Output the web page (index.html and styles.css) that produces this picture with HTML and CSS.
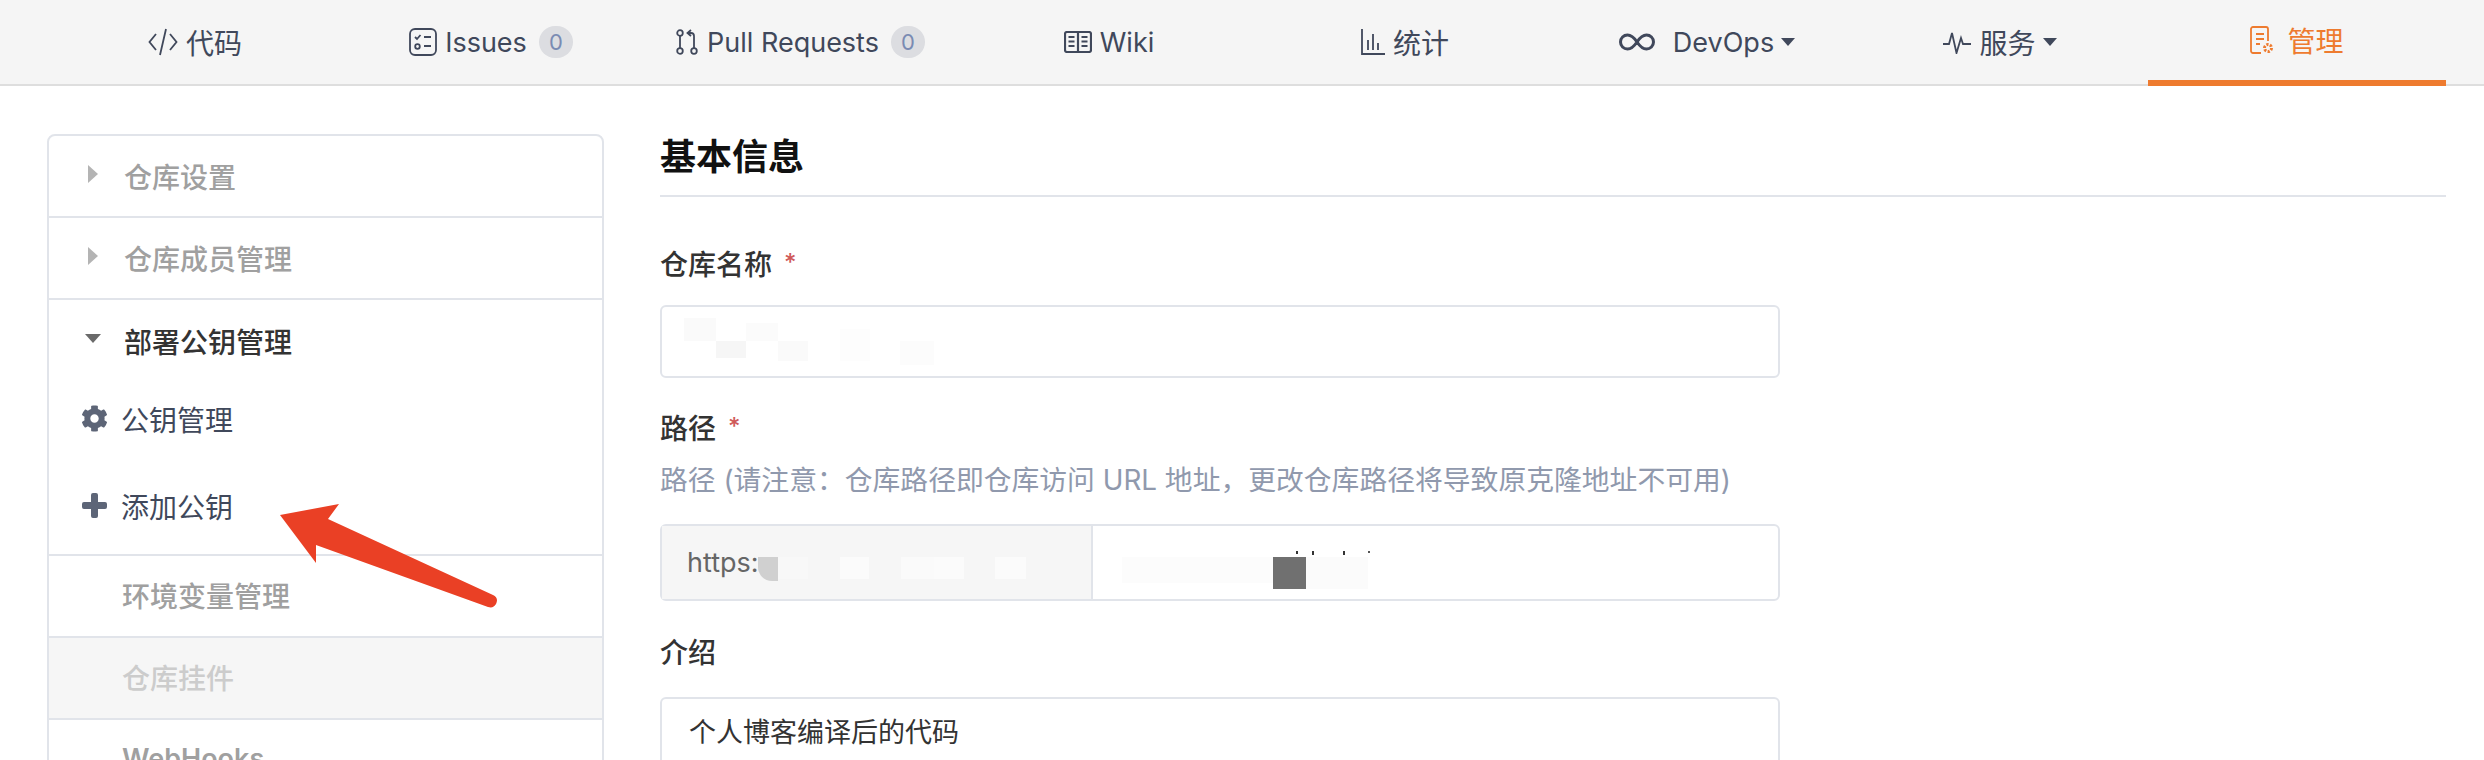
FILE: index.html
```html
<!DOCTYPE html>

<html>
  <head>
    <meta charset="UTF-8" />
    <title>管理</title>
    <link rel="stylesheet" href="styles.css">
  </head>

  <body>
    <nav class="tabs">
      <a class="tabs__item">
        <svg class="icon" width="30" height="28" viewBox="0 0 30 28"><path d="M8 6 1.500 14 8 22M22 6l6.500 8-6.500 8M18 1l-6 26"/></svg>
        <span class="tabs__cjk">代码</span>
      </a>
      <a class="tabs__item">
        <svg class="icon" width="28" height="28" viewBox="0 0 28 28"><rect x="1" y="1" width="26" height="26" rx="5"/><path d="M6 9l2 2 3.500-4M15 9h7M15 18h7"/><circle cx="8.500" cy="18.500" r="2.300"/></svg>
        <span>Issues</span>
        <b class="tabs__badge">0</b>
      </a>
      <a class="tabs__item">
        <svg class="icon" width="24" height="26" viewBox="0 0 24 26"><circle cx="5" cy="4" r="2.800"/><circle cx="5" cy="22" r="2.800"/><circle cx="19" cy="22" r="2.800"/><path d="M5 7v12M19 19V7c0-2-1-3-3-3h-3M16 1l-3.500 3 3.500 3"/></svg>
        <span>Pull Requests</span>
        <b class="tabs__badge">0</b>
      </a>
      <a class="tabs__item">
        <svg class="icon icon--heavy" width="28" height="22" viewBox="0 0 28 22"><rect x="1" y="1" width="26" height="20" rx="2"/><path d="M14 1v20M4.500 6h6M4.500 10.500h6M4.500 15h6M17.500 6h6M17.500 10.500h6M17.500 15h6"/></svg>
        <span>Wiki</span>
      </a>
      <a class="tabs__item">
        <svg class="icon" width="24" height="26" viewBox="0 0 24 26"><path d="M1 0v25h23M7 11v10M12 5v16M17 14v7"/></svg>
        <span class="tabs__cjk">统计</span>
      </a>
      <a class="tabs__item">
        <svg class="icon icon--thick icon--gap" width="36" height="18" viewBox="0 0 36 18"><path d="M18 9c-3-4.500-6-7-9.500-7a7 7 0 0 0 0 14c3.500 0 6.500-2.500 9.500-7s6-7 9.500-7a7 7 0 0 1 0 14c-3.500 0-6.500-2.500-9.500-7z"/></svg>
        <span>DevOps</span>
        <i class="tabs__caret"></i>
      </a>
      <a class="tabs__item">
        <svg class="icon" width="28" height="24" viewBox="0 0 28 24"><path d="M0 14h6l3-11 4.500 20L18 8l2 6h8"/></svg>
        <span class="tabs__cjk">服务</span>
        <i class="tabs__caret"></i>
      </a>
      <a class="tabs__item tabs__item--active">
        <svg class="icon" width="24" height="28" viewBox="0 0 24 28"><path d="M11 27H3a2 2 0 0 1-2-2V3a2 2 0 0 1 2-2h13a2 2 0 0 1 2 2v12M6 8h8M6 13h8M6 18h4"/><circle class="icon__gear" cx="18" cy="22" r="3.500"/></svg>
        <span class="tabs__cjk">管理</span>
      </a>
    </nav>

    <div class="page">
      <aside class="menu">
        <div class="menu__row">
          <i class="menu__arrow"></i>
          <span class="menu__title">仓库设置</span>
        </div>
        <div class="menu__row">
          <i class="menu__arrow"></i>
          <span class="menu__title">仓库成员管理</span>
        </div>
        <div class="menu__group">
          <div class="menu__head">
            <i class="menu__arrow-down"></i>
            <span class="menu__title menu__title--open">部署公钥管理</span>
          </div>
          <a class="menu__link">
            <svg class="menu__icon" width="27" height="27" viewBox="0 0 512 512"><path d="M487.400 315.700l-42.600-24.600c4.300-23.200 4.300-47 0-70.200l42.600-24.600c4.900-2.800 7.100-8.600 5.500-14-11.100-35.600-30-67.800-54.700-94.600-3.800-4.100-10-5.100-14.800-2.300L380.800 110c-17.900-15.400-38.500-27.300-60.800-35.100V25.800c0-5.600-3.900-10.500-9.400-11.700-36.700-8.200-74.300-7.800-109.200 0-5.500 1.200-9.400 6.100-9.400 11.700V75c-22.200 7.900-42.800 19.800-60.800 35.100L88.700 85.500c-4.900-2.800-11-1.900-14.800 2.300-24.700 26.700-43.600 58.900-54.700 94.600-1.700 5.400.6 11.200 5.500 14L67.300 221c-4.300 23.200-4.300 47 0 70.200l-42.600 24.600c-4.900 2.800-7.100 8.600-5.500 14 11.100 35.600 30 67.800 54.700 94.600 3.800 4.100 10 5.100 14.800 2.300l42.600-24.600c17.900 15.400 38.500 27.300 60.800 35.100v49.200c0 5.600 3.900 10.500 9.400 11.700 36.700 8.200 74.300 7.800 109.200 0 5.500-1.200 9.400-6.100 9.400-11.700v-49.200c22.200-7.900 42.800-19.800 60.800-35.100l42.600 24.600c4.900 2.800 11 1.900 14.800-2.300 24.700-26.700 43.600-58.900 54.700-94.600 1.500-5.500-.7-11.300-5.600-14.100zM256 336c-44.100 0-80-35.900-80-80s35.900-80 80-80 80 35.900 80 80-35.900 80-80 80z"/></svg>
            <span>公钥管理</span>
          </a>
          <a class="menu__link">
            <svg class="menu__icon" width="27" height="27" viewBox="0 0 27 27"><path d="M10 3a2 2 0 0 1 2-2h3a2 2 0 0 1 2 2v7h7a2 2 0 0 1 2 2v3a2 2 0 0 1-2 2h-7v7a2 2 0 0 1-2 2h-3a2 2 0 0 1-2-2v-7H3a2 2 0 0 1-2-2v-3a2 2 0 0 1 2-2h7z"/></svg>
            <span>添加公钥</span>
          </a>
        </div>
        <div class="menu__row menu__row--plain">
          <span class="menu__title">环境变量管理</span>
        </div>
        <div class="menu__row menu__row--plain menu__row--disabled">
          <span class="menu__title">仓库挂件</span>
        </div>
        <div class="menu__row menu__row--plain">
          <span class="menu__title menu__title--latin">WebHooks</span>
        </div>
      </aside>

      <main class="panel">
        <h2 class="panel__title">基本信息</h2>

        <div class="field field--name">
          <label class="field__label">仓库名称<em class="field__star">*</em></label>
          <div class="field__input field__input--name">
            <i class="blur blur--n1"></i>
            <i class="blur blur--n2"></i>
            <i class="blur blur--n3"></i>
            <i class="blur blur--n4"></i>
            <i class="blur blur--n5"></i>
            <i class="blur blur--n6"></i>
          </div>
        </div>

        <div class="field field--path">
          <label class="field__label">路径<em class="field__star">*</em></label>
          <p class="field__help">路径 (请注意：仓库路径即仓库访问 URL 地址，更改仓库路径将导致原克隆地址不可用)</p>
          <div class="field__input field__input--path">
            <div class="field__prefix">https:</div>
            <i class="blur blur--p1"></i>
            <i class="blur blur--p2"></i>
            <i class="blur blur--p3"></i>
            <i class="blur blur--p4"></i>
            <i class="blur blur--p5"></i>
            <i class="blur blur--p6"></i>
            <i class="blur blur--p7"></i>
            <i class="blur blur--p8"></i>
            <i class="blur blur--p9"></i>
            <i class="blur blur--d1"></i>
            <i class="blur blur--d2"></i>
            <i class="blur blur--d3"></i>
            <i class="blur blur--d4"></i>
          </div>
        </div>

        <div class="field field--desc">
          <label class="field__label">介绍</label>
          <div class="field__area">个人博客编译后的代码</div>
        </div>
      </main>
    </div>

    <svg class="arrow" width="230" height="110" viewBox="0 0 230 110"><path d="M4 11 63 0 52 15 217 91c4 2 5 5 3 9-2 3-4 4-8 3L40 41l0 18z"/></svg>
  </body>
</html>
```

FILE: styles.css
```css
:root {
  --color-main: #40485b;
  --color-text: #333333;
  --color-muted: #a0a0a0;
  --color-help: #9099ad;
  --color-line: #e1e4ea;
  --color-pad: #f6f6f6;
  --color-brand: #ee7b2f;
  --font-main: Inter, "Noto Sans CJK SC", sans-serif;
}

* {
  box-sizing: border-box;
  margin: 0;
  padding: 0;
}

html,
body {
  height: 760px;
  overflow: hidden;
}

body {
  position: relative;
  background-color: #ffffff;
  color: var(--color-text);
  font-family: var(--font-main);
  font-size: 28px;
}

i,
em {
  font-style: normal;
}

.tabs {
  display: grid;
  grid-template-columns: 314px 278px 340px 278px 314px 290px 296px 298px;
  height: 86px;
  padding-left: 38px;
  background-color: #f5f5f5;
  border-bottom: 2px solid #dedede;
  color: var(--color-main);
  font-size: 27px;
}

.tabs__item {
  display: flex;
  align-items: center;
  justify-content: center;
  gap: 8px;
  height: 84px;
}

.tabs__item--active {
  height: 86px;
  gap: 13px;
  color: var(--color-brand);
  border-bottom: 6px solid var(--color-brand);
}

.tabs__cjk {
  font-size: 28px;
}

.tabs__badge {
  display: flex;
  align-items: center;
  justify-content: center;
  width: 34px;
  height: 32px;
  margin-left: 4px;
  border-radius: 16px;
  background-color: #dcdde1;
  color: #7a8bb3;
  font-size: 22px;
  font-weight: 400;
}

.tabs__caret {
  width: 0;
  height: 0;
  margin-left: -1px;
  border-top: 8px solid currentColor;
  border-left: 7px solid transparent;
  border-right: 7px solid transparent;
}

.icon {
  flex: none;
  fill: none;
  stroke: currentColor;
  stroke-width: 1.8;
}

.icon--heavy {
  stroke-width: 2.2;
}

.icon--thick {
  stroke-width: 3;
}

.icon--gap {
  margin-right: 10px;
}

.icon__gear {
  stroke-width: 3;
  stroke-dasharray: 2.200 1.400;
}

.page {
  display: flex;
  gap: 56px;
  padding: 48px 38px 0 47px;
}

.menu {
  flex: none;
  width: 557px;
  border: 2px solid var(--color-line);
  border-radius: 8px;
  font-weight: 500;
}

.menu__row {
  display: flex;
  align-items: center;
  gap: 26px;
  height: 82px;
  padding-left: 39px;
  border-bottom: 2px solid var(--color-line);
}

.menu__row--plain {
  padding-left: 73px;
  padding-bottom: 3px;
}

.menu__row--disabled {
  background-color: var(--color-pad);
}

.menu__row--disabled .menu__title {
  color: #cccccc;
}

.menu__title {
  color: var(--color-muted);
}

.menu__title--open {
  color: var(--color-text);
}

.menu__title--latin {
  font-size: 27px;
  font-weight: 600;
}

.menu__arrow {
  width: 0;
  height: 0;
  border-left: 10px solid #b4b4b4;
  border-top: 9px solid transparent;
  border-bottom: 9px solid transparent;
  transform: translateY(-2px);
}

.menu__arrow-down {
  width: 0;
  height: 0;
  border-top: 9px solid #6a6a6a;
  border-left: 8px solid transparent;
  border-right: 8px solid transparent;
  transform: translateY(-3px);
}

.menu__group {
  height: 256px;
  padding-top: 20px;
  border-bottom: 2px solid var(--color-line);
}

.menu__head {
  display: flex;
  align-items: center;
  gap: 23px;
  height: 42px;
  padding-left: 36px;
  margin-bottom: 13px;
}

.menu__link {
  display: flex;
  align-items: center;
  gap: 13px;
  height: 87px;
  padding-left: 32px;
  color: var(--color-main);
  font-weight: 400;
}

.menu__icon {
  flex: none;
  fill: #5d6577;
}

.panel {
  flex: 1;
}

.panel__title {
  height: 63px;
  border-bottom: 2px solid var(--color-line);
  color: #111111;
  font-size: 36px;
  font-weight: 600;
  line-height: 46px;
}

.field__label {
  display: block;
  color: var(--color-text);
  font-weight: 500;
  line-height: 38px;
}

.field__star {
  margin-left: 12px;
  color: #cf5a5a;
  font-size: 24px;
  vertical-align: 4px;
}

.field--name {
  padding-top: 47px;
}

.field--path {
  padding-top: 30px;
}

.field--desc {
  padding-top: 33px;
}

.field__help {
  margin-top: 14px;
  color: var(--color-help);
  font-size: 27.8px;
  line-height: 36px;
}

.field__input {
  position: relative;
  width: 1120px;
  border: 2px solid var(--color-line);
  border-radius: 6px;
}

.field__input--name {
  height: 73px;
  margin-top: 21px;
}

.field__input--path {
  display: flex;
  height: 77px;
  margin-top: 26px;
}

.field__prefix {
  display: flex;
  align-items: center;
  width: 431px;
  height: 100%;
  padding-left: 25px;
  background-color: var(--color-pad);
  border-right: 2px solid var(--color-line);
  color: #666666;
  font-size: 27px;
}

.field__area {
  width: 1120px;
  height: 120px;
  margin-top: 25px;
  padding: 12px 27px;
  border: 2px solid var(--color-line);
  border-radius: 6px;
  color: var(--color-text);
  font-size: 27px;
}

/* smudges over the hidden parts of the screenshot */
.blur {
  position: absolute;
}

.blur--n1 { left: 22px; top: 11px; width: 32px; height: 23px; background: #fafafa; }
.blur--n2 { left: 54px; top: 34px; width: 30px; height: 17px; background: #f6f6f6; }
.blur--n3 { left: 84px; top: 16px; width: 32px; height: 18px; background: #fbfbfb; }
.blur--n4 { left: 116px; top: 34px; width: 30px; height: 20px; background: #fafafa; }
.blur--n5 { left: 178px; top: 22px; width: 30px; height: 32px; background: #fdfdfd; }
.blur--n6 { left: 238px; top: 34px; width: 34px; height: 24px; background: #fcfcfc; }

.blur--p1 { left: 96px; top: 31px; width: 20px; height: 24px; background: #d0d0d0; border-bottom-left-radius: 14px; }
.blur--p2 { left: 116px; top: 31px; width: 30px; height: 22px; background: #f8f8f8; }
.blur--p3 { left: 178px; top: 31px; width: 29px; height: 22px; background: #fbfbfb; }
.blur--p4 { left: 239px; top: 31px; width: 33px; height: 22px; background: #fafafa; }
.blur--p5 { left: 272px; top: 31px; width: 30px; height: 22px; background: #fbfbfb; }
.blur--p6 { left: 333px; top: 31px; width: 31px; height: 22px; background: #fbfbfb; }
.blur--p7 { left: 460px; top: 31px; width: 151px; height: 26px; background: #fcfcfc; }
.blur--p8 { left: 611px; top: 31px; width: 33px; height: 32px; background: #707070; }
.blur--p9 { left: 644px; top: 31px; width: 62px; height: 32px; background: #fbfbfb; }

.blur--d1 { left: 634px; top: 25px; width: 2px; height: 3px; background: #333333; }
.blur--d2 { left: 650px; top: 25px; width: 2px; height: 4px; background: #333333; }
.blur--d3 { left: 681px; top: 25px; width: 2px; height: 4px; background: #333333; }
.blur--d4 { left: 706px; top: 25px; width: 2px; height: 2px; background: #555555; }

.arrow {
  position: absolute;
  left: 276px;
  top: 504px;
  fill: #ea4025;
}
```
